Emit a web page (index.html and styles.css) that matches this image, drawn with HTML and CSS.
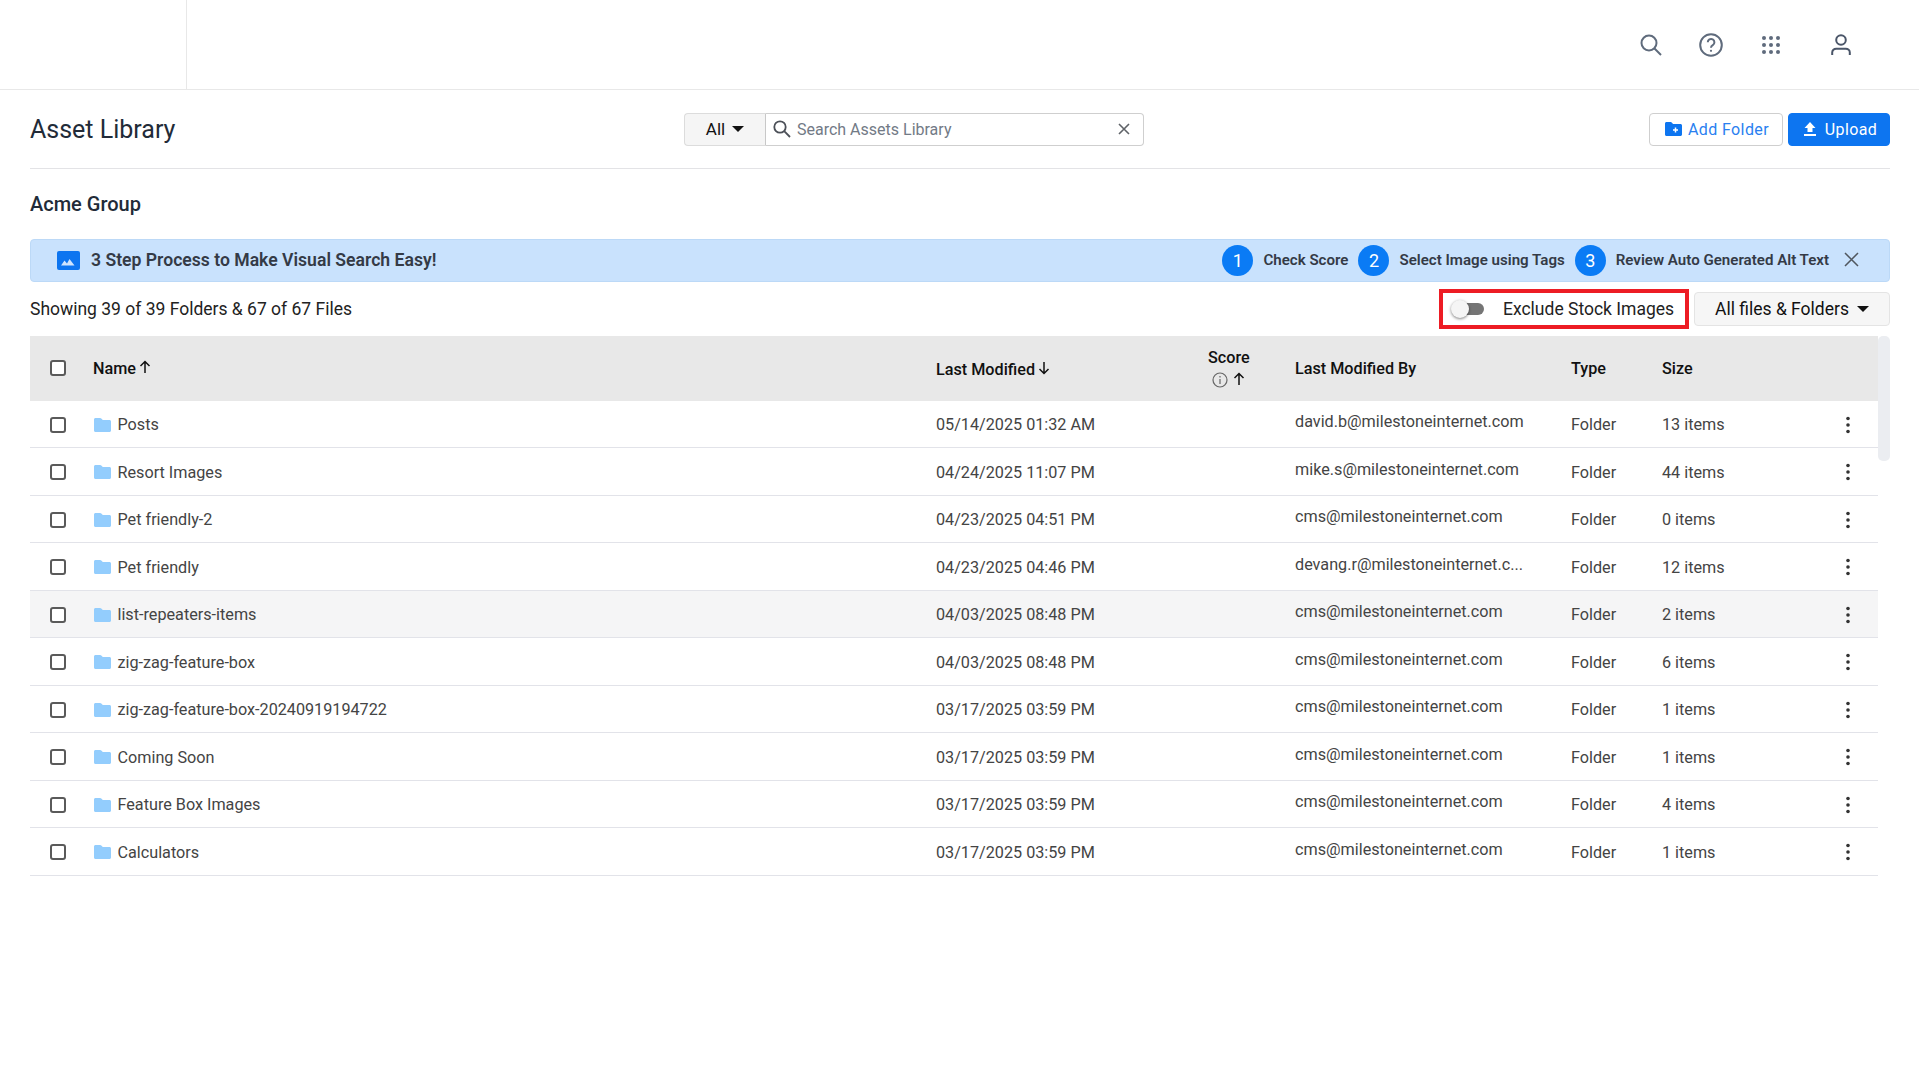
FILE: index.html
```html
<!DOCTYPE html>
<html lang="en">
<head>
    <meta charset="UTF-8">
    <meta name="viewport" content="width=device-width, initial-scale=1.0">
    <title>Asset Library</title>
    <link rel="stylesheet" href="styles.css">
</head>
<body>
    <svg class="sprites" width="0" height="0">
        <symbol id="folder" viewBox="0 0 17 14">
            <path d="M1.5 0h4.6c.5 0 .9.2 1.2.5L8.8 2h6.7c.8 0 1.5.7 1.5 1.5v9c0 .8-.7 1.5-1.5 1.5h-14C.7 14 0 13.3 0 12.500v-11C0 .7.7 0 1.500 0z"/>
        </symbol>
        <symbol id="kebab" viewBox="0 0 6 18">
            <circle cx="3" cy="2.500" r="1.800"/>
            <circle cx="3" cy="9" r="1.800"/>
            <circle cx="3" cy="15.500" r="1.800"/>
        </symbol>
        <symbol id="arrow-up" viewBox="0 0 12 14">
            <path d="M6 13V1.500M1.500 6L6 1.500 10.500 6" fill="none" stroke="currentColor" stroke-width="1.500"/>
        </symbol>
    </svg>

    <!-- top bar -->
    <header class="topbar">
        <div class="logo-slot"></div>
        <div class="top-icons">
            <svg class="top-icon icon-search" viewBox="0 0 22 22"><circle cx="9" cy="9" r="7.500"/><path d="M14.500 14.500L21 21"/></svg>
            <svg class="top-icon icon-help" viewBox="0 0 24 24"><circle cx="12" cy="12" r="10.800"/><path d="M8.800 9.300a3.300 3.300 0 1 1 5 2.800c-1.100.7-1.800 1.300-1.800 2.600"/><circle class="dot" cx="12" cy="17.800" r="1.100"/></svg>
            <svg class="top-icon icon-grid" viewBox="0 0 20 20">
                <circle cx="3" cy="3" r="2"/><circle cx="10" cy="3" r="2"/><circle cx="17" cy="3" r="2"/>
                <circle cx="3" cy="10" r="2"/><circle cx="10" cy="10" r="2"/><circle cx="17" cy="10" r="2"/>
                <circle cx="3" cy="17" r="2"/><circle cx="10" cy="17" r="2"/><circle cx="17" cy="17" r="2"/>
            </svg>
            <svg class="top-icon icon-user" viewBox="0 0 20 22"><circle cx="10" cy="6" r="4.800"/><path d="M1.200 21v-2.500c0-2.300 1.800-3.800 4-3.800h9.600c2.200 0 4 1.500 4 3.800V21"/></svg>
        </div>
    </header>

    <main class="page">
        <div class="toolbar">
            <h1 class="title">Asset Library</h1>
            <div class="search-group">
                <div class="search-type">All <span class="caret"></span></div>
                <div class="search-box">
                    <svg class="search-glass" viewBox="0 0 18 18"><circle cx="7" cy="7" r="5.700"/><path d="M11.200 11.200L17 17"/></svg>
                    <span class="search-text">Search Assets Library</span>
                    <svg class="search-clear" viewBox="0 0 12 12"><path d="M1 1l10 10M11 1L1 11"/></svg>
                </div>
            </div>
            <div class="actions">
                <button class="btn btn-outline">
                    <svg class="btn-icon" viewBox="0 0 17 14"><path fill="#0d75f0" d="M1.500 0h4.600l2 2h7.400c.8 0 1.500.7 1.500 1.500v9c0 .8-.7 1.500-1.500 1.500h-14C.7 14 0 13.300 0 12.500v-11C0 .7.700 0 1.500 0z"/><path d="M10.500 5.500v5M8 8h5" stroke="#fff" stroke-width="1.500"/></svg>
                    Add Folder
                </button>
                <button class="btn btn-primary">
                    <svg class="btn-icon" viewBox="0 0 14 14"><path fill="#fff" d="M7 0l5.500 6H9.500v4h-5V6H1.500zM1 12h12v2H1z"/></svg>
                    Upload
                </button>
            </div>
        </div>

        <h2 class="group-name">Acme Group</h2>

        <div class="banner">
            <svg class="banner-icon" viewBox="0 0 23 19"><rect width="23" height="19" rx="2" fill="#0d75f0"/><path fill="#cfe4fd" d="M4 14.500l3.500-5 2.500 3 2.500-4.500 5 6.500z"/></svg>
            <strong class="banner-title">3 Step Process to Make Visual Search Easy!</strong>
            <div class="steps">
                <span class="step-num">1</span><span class="step-label">Check Score</span>
                <span class="step-num">2</span><span class="step-label">Select Image using Tags</span>
                <span class="step-num">3</span><span class="step-label">Review Auto Generated Alt Text</span>
                <svg class="banner-close" viewBox="0 0 15 15"><path d="M1 1l13 13M14 1L1 14"/></svg>
            </div>
        </div>

        <div class="filter-row">
            <span class="count">Showing 39 of 39 Folders &amp; 67 of 67 Files</span>
            <div class="filter-right">
                <div class="stock-toggle">
                    <span class="switch"><span class="thumb"></span></span>
                    <span>Exclude Stock Images</span>
                </div>
                <div class="file-filter">All files &amp; Folders <span class="caret"></span></div>
            </div>
        </div>

        <div class="table-wrap">
            <div class="table">
                <div class="row head">
                    <div><input type="checkbox" class="check"></div>
                    <div class="name-head">Name<svg class="sort"><use href="#arrow-up"/></svg></div>
                    <div class="modified-head">Last Modified<svg class="sort down"><use href="#arrow-up"/></svg></div>
                    <div class="score-head">
                        <span>Score</span>
                        <span class="score-icons">
                            <svg class="info" viewBox="0 0 16 16"><circle cx="8" cy="8" r="7"/><path d="M8 7v5M8 4v1.500"/></svg><svg class="sort"><use href="#arrow-up"/></svg>
                        </span>
                    </div>
                    <div>Last Modified By</div>
                    <div>Type</div>
                    <div>Size</div>
                    <div></div>
                </div>

                <div class="row">
                    <div><input type="checkbox" class="check"></div>
                    <div class="name"><svg class="folder"><use href="#folder"/></svg>Posts</div>
                    <div>05/14/2025 01:32 AM</div><div></div>
                    <div class="email">david.b@milestoneinternet.com</div>
                    <div>Folder</div><div>13 items</div>
                    <div class="menu"><svg class="kebab"><use href="#kebab"/></svg></div>
                </div>
                <div class="row">
                    <div><input type="checkbox" class="check"></div>
                    <div class="name"><svg class="folder"><use href="#folder"/></svg>Resort Images</div>
                    <div>04/24/2025 11:07 PM</div><div></div>
                    <div class="email">mike.s@milestoneinternet.com</div>
                    <div>Folder</div><div>44 items</div>
                    <div class="menu"><svg class="kebab"><use href="#kebab"/></svg></div>
                </div>
                <div class="row">
                    <div><input type="checkbox" class="check"></div>
                    <div class="name"><svg class="folder"><use href="#folder"/></svg>Pet friendly-2</div>
                    <div>04/23/2025 04:51 PM</div><div></div>
                    <div class="email">cms@milestoneinternet.com</div>
                    <div>Folder</div><div>0 items</div>
                    <div class="menu"><svg class="kebab"><use href="#kebab"/></svg></div>
                </div>
                <div class="row">
                    <div><input type="checkbox" class="check"></div>
                    <div class="name"><svg class="folder"><use href="#folder"/></svg>Pet friendly</div>
                    <div>04/23/2025 04:46 PM</div><div></div>
                    <div class="email">devang.r@milestoneinternet.c...</div>
                    <div>Folder</div><div>12 items</div>
                    <div class="menu"><svg class="kebab"><use href="#kebab"/></svg></div>
                </div>
                <div class="row hovered">
                    <div><input type="checkbox" class="check"></div>
                    <div class="name"><svg class="folder"><use href="#folder"/></svg>list-repeaters-items</div>
                    <div>04/03/2025 08:48 PM</div><div></div>
                    <div class="email">cms@milestoneinternet.com</div>
                    <div>Folder</div><div>2 items</div>
                    <div class="menu"><svg class="kebab"><use href="#kebab"/></svg></div>
                </div>
                <div class="row">
                    <div><input type="checkbox" class="check"></div>
                    <div class="name"><svg class="folder"><use href="#folder"/></svg>zig-zag-feature-box</div>
                    <div>04/03/2025 08:48 PM</div><div></div>
                    <div class="email">cms@milestoneinternet.com</div>
                    <div>Folder</div><div>6 items</div>
                    <div class="menu"><svg class="kebab"><use href="#kebab"/></svg></div>
                </div>
                <div class="row">
                    <div><input type="checkbox" class="check"></div>
                    <div class="name"><svg class="folder"><use href="#folder"/></svg>zig-zag-feature-box-20240919194722</div>
                    <div>03/17/2025 03:59 PM</div><div></div>
                    <div class="email">cms@milestoneinternet.com</div>
                    <div>Folder</div><div>1 items</div>
                    <div class="menu"><svg class="kebab"><use href="#kebab"/></svg></div>
                </div>
                <div class="row">
                    <div><input type="checkbox" class="check"></div>
                    <div class="name"><svg class="folder"><use href="#folder"/></svg>Coming Soon</div>
                    <div>03/17/2025 03:59 PM</div><div></div>
                    <div class="email">cms@milestoneinternet.com</div>
                    <div>Folder</div><div>1 items</div>
                    <div class="menu"><svg class="kebab"><use href="#kebab"/></svg></div>
                </div>
                <div class="row">
                    <div><input type="checkbox" class="check"></div>
                    <div class="name"><svg class="folder"><use href="#folder"/></svg>Feature Box Images</div>
                    <div>03/17/2025 03:59 PM</div><div></div>
                    <div class="email">cms@milestoneinternet.com</div>
                    <div>Folder</div><div>4 items</div>
                    <div class="menu"><svg class="kebab"><use href="#kebab"/></svg></div>
                </div>
                <div class="row">
                    <div><input type="checkbox" class="check"></div>
                    <div class="name"><svg class="folder"><use href="#folder"/></svg>Calculators</div>
                    <div>03/17/2025 03:59 PM</div><div></div>
                    <div class="email">cms@milestoneinternet.com</div>
                    <div>Folder</div><div>1 items</div>
                    <div class="menu"><svg class="kebab"><use href="#kebab"/></svg></div>
                </div>
            </div>
            <div class="scroll-track"></div>
        </div>
    </main>
</body>
</html>
```

FILE: styles.css
```css
* {
    box-sizing: border-box;
}
body {
    margin: 0;
    font-family: Roboto, "Liberation Sans", sans-serif;
    font-size: 16px;
    color: #444;
    background-color: #fff;
}
.sprites {
    display: block;
    height: 0;
}

/* top bar */
.topbar {
    display: flex;
    justify-content: space-between;
    height: 90px;
    border-bottom: 1px solid #e8e8e8;
}
.logo-slot {
    width: 187px;
    border-right: 1px solid #e8e8e8;
}
.top-icons {
    display: flex;
    align-items: center;
    padding-right: 68px;
}
.top-icon {
    display: block;
    fill: none;
    stroke: #5f6b7c;
    stroke-width: 2;
}
.icon-search {
    width: 22px;
    height: 22px;
    margin-right: 37px;
}
.icon-help {
    width: 24px;
    height: 24px;
    margin-right: 38px;
}
.icon-help .dot {
    fill: #5f6b7c;
    stroke: none;
}
.icon-grid {
    width: 20px;
    height: 20px;
    margin-right: 50px;
    fill: #5f6b7c;
    stroke: none;
}
.icon-user {
    width: 20px;
    height: 22px;
    stroke: #4a5568;
}

/* title row */
.page {
    padding: 0 29px 0 30px;
}
.toolbar {
    display: grid;
    grid-template-columns: 654px 460px 1fr;
    align-items: center;
    height: 79px;
    border-bottom: 1px solid #e3e3e6;
}
.title {
    margin: 0;
    font-size: 25px;
    font-weight: 400;
    color: #222b38;
}
.search-group {
    display: flex;
    height: 33px;
}
.search-type {
    display: flex;
    align-items: center;
    justify-content: center;
    gap: 7px;
    width: 82px;
    font-size: 17px;
    color: #111;
    background-color: #f5f5f5;
    border: 1px solid #dcdcdc;
    border-right: 1px solid #c8c8c8;
    border-radius: 4px 0 0 4px;
}
.caret {
    display: inline-block;
    border-top: 6px solid #111;
    border-left: 6px solid transparent;
    border-right: 6px solid transparent;
}
.search-box {
    display: flex;
    align-items: center;
    width: 378px;
    padding: 0 13px 0 7px;
    border: 1px solid #cfcfcf;
    border-left: 0;
    border-radius: 0 4px 4px 0;
}
.search-glass {
    width: 18px;
    height: 18px;
    margin-right: 6px;
    fill: none;
    stroke: #4c5058;
    stroke-width: 1.800;
}
.search-text {
    flex: 1;
    color: #727a86;
}
.search-clear {
    width: 12px;
    height: 12px;
    fill: none;
    stroke: #5f6368;
    stroke-width: 1.600;
}
.actions {
    display: flex;
    justify-content: flex-end;
    gap: 5px;
}
.btn {
    display: flex;
    align-items: center;
    justify-content: center;
    height: 33px;
    padding: 0 0 0 2px;
    font-family: inherit;
    font-size: 16px;
    letter-spacing: 0.4px;
    border-radius: 4px;
}
.btn-outline {
    width: 134px;
    gap: 6px;
    color: #2a7ff0;
    background-color: #fff;
    border: 1px solid #cfcfcf;
}
.btn-primary {
    width: 102px;
    gap: 8px;
    color: #fff;
    background-color: #0d75f0;
    border: 1px solid #0d75f0;
}
.btn-outline .btn-icon {
    width: 17px;
    height: 14px;
}
.btn-primary .btn-icon {
    width: 14px;
    height: 14px;
}

.group-name {
    display: flex;
    align-items: center;
    height: 70px;
    margin: 0;
    font-size: 20px;
    font-weight: 500;
    color: #222b38;
}

/* banner */
.banner {
    display: flex;
    align-items: center;
    justify-content: space-between;
    height: 43px;
    padding: 0 30px 0 26px;
    background-color: #c9e2fd;
    border: 1px solid #bcd9f7;
    border-radius: 4px;
}
.banner-icon {
    flex: none;
    width: 23px;
    height: 19px;
    margin-right: 11px;
}
.banner-title {
    flex: 1;
    margin-bottom: 1px;
    font-size: 17.600px;
    font-weight: 600;
    color: #343a46;
}
.steps {
    display: flex;
    align-items: center;
    font-size: 15.100px;
    font-weight: 600;
    color: #343a46;
}
.step-num {
    display: flex;
    align-items: center;
    justify-content: center;
    width: 31px;
    height: 31px;
    margin-right: 10px;
    font-size: 18px;
    font-weight: 400;
    color: #fff;
    background-color: #0a7bf5;
    border-radius: 50%;
}
.step-label {
    margin-right: 10px;
    margin-bottom: 1px;
}
.banner-close {
    width: 15px;
    height: 15px;
    margin-left: 5px;
    margin-bottom: 2px;
    fill: none;
    stroke: #50575f;
    stroke-width: 1.500;
}

/* filter row */
.filter-row {
    display: flex;
    align-items: center;
    justify-content: space-between;
    height: 54px;
    color: #222;
}
.count {
    font-size: 17.500px;
}
.filter-right {
    display: flex;
    align-items: center;
    gap: 5px;
}
.stock-toggle {
    display: flex;
    align-items: center;
    width: 250px;
    height: 40px;
    padding-left: 9px;
    border: 4px solid #ed1c24;
    gap: 19px;
    font-size: 17.500px;
    white-space: nowrap;
}
.switch {
    position: relative;
    display: block;
    flex: none;
    width: 32px;
    height: 12px;
    background-color: #757575;
    border-radius: 6px;
}
.thumb {
    position: absolute;
    top: -3px;
    left: -1px;
    width: 18px;
    height: 18px;
    background-color: #f5f5f5;
    border-radius: 50%;
    box-shadow: 0 1px 3px rgba(0, 0, 0, 0.5);
}
.file-filter {
    display: flex;
    align-items: center;
    justify-content: center;
    gap: 8px;
    width: 196px;
    height: 34px;
    font-size: 17.500px;
    color: #111;
    background-color: #f6f6f6;
    border: 1px solid #e4e4e4;
    border-radius: 4px;
}

/* table */
.table-wrap {
    display: flex;
    align-items: flex-start;
}
.table {
    flex: 1;
}
.row {
    display: grid;
    grid-template-columns: 64px 842px 272px 87px 276px 91px 170px 32px;
    align-items: center;
    height: 47.500px;
    padding-top: 2px;
    border-bottom: 1px solid #e2e3e9;
    font-size: 16.200px;
}
.row.head {
    height: 64.500px;
    padding-top: 0;
    font-size: 16.200px;
    font-weight: 500;
    color: #111;
    background-color: #e8e8e8;
    border-bottom: 0;
}
.row.hovered {
    background-color: #f5f5f6;
}
.check {
    display: block;
    appearance: none;
    width: 16px;
    height: 16px;
    margin: 0 0 0 20px;
    background-color: #fff;
    border: 2px solid #5a5a5a;
    border-radius: 3px;
}
.name {
    display: flex;
    align-items: center;
    color: #444;
}
.folder {
    width: 17px;
    height: 14px;
    margin-right: 6.500px;
    fill: #93cdfd;
}
.name-head,
.modified-head {
    display: flex;
    align-items: center;
}
.name-head {
    margin-left: -1px;
}
.modified-head {
    margin-top: 2px;
}
.sort {
    width: 12px;
    height: 14px;
    margin-left: 3px;
    margin-bottom: 2px;
}
.sort.down {
    transform: rotate(180deg);
}
.score-head {
    display: flex;
    flex-direction: column;
    align-items: flex-start;
    gap: 5px;
    margin-top: -1px;
}
.score-icons {
    display: flex;
    align-items: center;
    padding-left: 4px;
}
.info {
    width: 16px;
    height: 16px;
    margin-right: 2px;
    fill: none;
    stroke: #666;
    stroke-width: 1.200;
}
.email {
    margin-top: -6px;
}
.menu {
    display: flex;
    justify-content: center;
}
.kebab {
    width: 6px;
    height: 18px;
    fill: #333;
}
.scroll-track {
    flex: none;
    width: 12px;
    height: 125px;
    background-color: #ebedf1;
    border-radius: 5px;
}
```
